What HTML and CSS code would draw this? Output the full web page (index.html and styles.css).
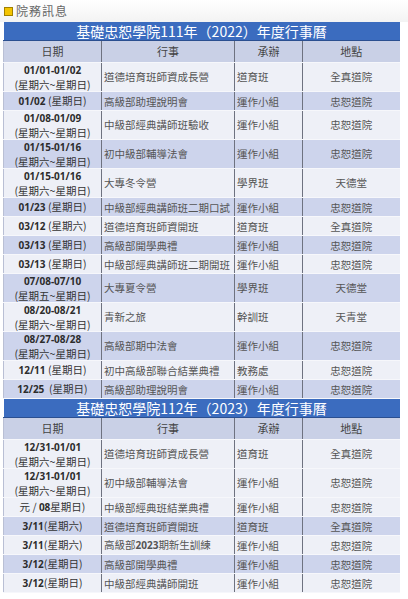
FILE: index.html
```html
<!DOCTYPE html>
<html lang="zh-Hant">
<head>
<meta charset="utf-8">
<link rel="stylesheet" href="styles.css">
</head>
<body>
<div class="page">
  <div class="heading"><span class="mark"></span><span class="heading-text">院務訊息</span></div>
  <table class="cal">
    <colgroup><col class="c1"><col class="c2"><col class="c3"><col class="c4"></colgroup>
    <tr class="title"><td colspan="4">基礎忠恕學院111年（2022）年度行事曆</td></tr>
    <tr class="head"><td>日期</td><td>行事</td><td>承辦</td><td>地點</td></tr>
    <tr class="lt tall"><td class="d"><b>01/01-01/02</b><br>(星期六~星期日)</td><td class="e">道德培育班師資成長營</td><td class="h">道育班</td><td class="p">全真道院</td></tr>
    <tr class="dk"><td class="d"><b>01/02</b> (星期日)</td><td class="e">高級部助理說明會</td><td class="h">運作小組</td><td class="p">忠恕道院</td></tr>
    <tr class="lt tall"><td class="d"><b>01/08-01/09</b><br>(星期六~星期日)</td><td class="e">中級部經典講師班驗收</td><td class="h">運作小組</td><td class="p">忠恕道院</td></tr>
    <tr class="dk tall"><td class="d"><b>01/15-01/16</b><br>(星期六~星期日)</td><td class="e">初中級部輔導法會</td><td class="h">運作小組</td><td class="p">忠恕道院</td></tr>
    <tr class="lt tall"><td class="d"><b>01/15-01/16</b><br>(星期六~星期日)</td><td class="e">大專冬令營</td><td class="h">學界班</td><td class="p">天德堂</td></tr>
    <tr class="dk"><td class="d"><b>01/23</b> (星期日)</td><td class="e">中級部經典講師班二期口試</td><td class="h">運作小組</td><td class="p">忠恕道院</td></tr>
    <tr class="lt"><td class="d"><b>03/12</b> (星期六)</td><td class="e">道德培育班師資開班</td><td class="h">道育班</td><td class="p">全真道院</td></tr>
    <tr class="dk"><td class="d"><b>03/13</b> (星期日)</td><td class="e">高級部開學典禮</td><td class="h">運作小組</td><td class="p">忠恕道院</td></tr>
    <tr class="lt"><td class="d"><b>03/13</b> (星期日)</td><td class="e">中級部經典講師班二期開班</td><td class="h">運作小組</td><td class="p">忠恕道院</td></tr>
    <tr class="dk tall"><td class="d"><b>07/08-07/10</b><br>(星期五~星期日)</td><td class="e">大專夏令營</td><td class="h">學界班</td><td class="p">天德堂</td></tr>
    <tr class="lt tall"><td class="d"><b>08/20-08/21</b><br>(星期六~星期日)</td><td class="e">青新之旅</td><td class="h">幹訓班</td><td class="p">天青堂</td></tr>
    <tr class="dk tall"><td class="d"><b>08/27-08/28</b><br>(星期六~星期日)</td><td class="e">高級部期中法會</td><td class="h">運作小組</td><td class="p">忠恕道院</td></tr>
    <tr class="lt"><td class="d"><b>12/11</b> (星期日)</td><td class="e">初中高級部聯合結業典禮</td><td class="h">教務處</td><td class="p">忠恕道院</td></tr>
    <tr class="dk"><td class="d"><b>12/25</b> &nbsp;(星期日)</td><td class="e">高級部助理說明會</td><td class="h">運作小組</td><td class="p">忠恕道院</td></tr>
    <tr class="title"><td colspan="4">基礎忠恕學院112年（2023）年度行事曆</td></tr>
    <tr class="head"><td>日期</td><td>行事</td><td>承辦</td><td>地點</td></tr>
    <tr class="lt tall"><td class="d"><b>12/31-01/01</b><br>(星期六~星期日)</td><td class="e">道德培育班師資成長營</td><td class="h">道育班</td><td class="p">全真道院</td></tr>
    <tr class="lt tall"><td class="d"><b>12/31-01/01</b><br>(星期六~星期日)</td><td class="e">初中級部輔導法會</td><td class="h">運作小組</td><td class="p">忠恕道院</td></tr>
    <tr class="lt"><td class="d plain">元 / <b>08</b>星期日)</td><td class="e">中級部經典班結業典禮</td><td class="h">運作小組</td><td class="p">忠恕道院</td></tr>
    <tr class="dk"><td class="d"><b>3/11</b>(星期六)</td><td class="e">道德培育班師資開班</td><td class="h">道育班</td><td class="p">全真道院</td></tr>
    <tr class="lt"><td class="d"><b>3/11</b>(星期六)</td><td class="e">高級部<b>2023</b>期新生訓練</td><td class="h">運作小組</td><td class="p">忠恕道院</td></tr>
    <tr class="dk"><td class="d"><b>3/12</b>(星期日)</td><td class="e">高級部開學典禮</td><td class="h">運作小組</td><td class="p">忠恕道院</td></tr>
    <tr class="lt"><td class="d"><b>3/12</b>(星期日)</td><td class="e">中級部經典講師開班</td><td class="h">運作小組</td><td class="p">忠恕道院</td></tr>
  </table>
</div>
</body>
</html>
```

FILE: styles.css
```css
html, body {
  margin: 0;
  padding: 0;
  background: #ffffff;
}
body {
  font-family: "Noto Sans CJK TC", "Noto Sans", sans-serif;
  color: #444;
}
.page {
  width: 408px;
  height: 599px;
  overflow: hidden;
}
.heading {
  height: 22px;
  display: flex;
  align-items: center;
  gap: 3px;
  padding-left: 4px;
  background: linear-gradient(#ffffff, #f3f3f3);
  box-sizing: border-box;
}
.mark {
  width: 7px;
  height: 7px;
  background: #f4c400;
  border: 1px solid #a08000;
}
.heading-text {
  font-size: 12px;
  color: #666;
  letter-spacing: 1px;
  line-height: 1;
}
.cal {
  margin-left: 3px;
  width: 396px;
  border-collapse: collapse;
  table-layout: fixed;
}
.c1 { width: 98px; }
.c2 { width: 133px; }
.c3 { width: 68px; }
.c4 { width: 97px; }
.cal td {
  padding: 0;
  font-size: 10.5px;
  line-height: 13px;
  height: 18px;
  border-bottom: 1px solid #f6f7fb;
  border-left: 1px solid #6e7280;
  vertical-align: middle;
  overflow: hidden;
  white-space: nowrap;
}
.cal td:first-child { border-left: 1px solid #b9bfd4; }
.cal tr.tall td { height: 27px; line-height: 13.5px; }
.title td {
  background: #3b6cbf;
  color: #ffffff;
  font-size: 14px;
  height: 18px;
  line-height: 18px;
  text-align: center;
  border-left: none !important;
  border-bottom: 1px solid #2b4f90;
}
.head td {
  background: #c9d0e6;
  height: 21px;
  text-align: center;
  color: #444;
  font-size: 11px;
}
.lt td { background: #eef0f7; }
.dk td { background: #cdd4ec; }
.d {
  text-align: center;
  color: #333;
}
.d b {
  font-family: "Open Sans", "Liberation Sans", sans-serif;
  font-weight: 700;
  font-size: 10px;
  color: #2c2c2c;
}
.e {
  padding-left: 2px !important;
  color: #555;
}
.e b {
  font-family: "Open Sans", "Liberation Sans", sans-serif;
  font-weight: 700;
  font-size: 10px;
}
.h {
  padding-left: 2px !important;
  color: #555;
}
.p {
  text-align: center;
  color: #555;
}
```
